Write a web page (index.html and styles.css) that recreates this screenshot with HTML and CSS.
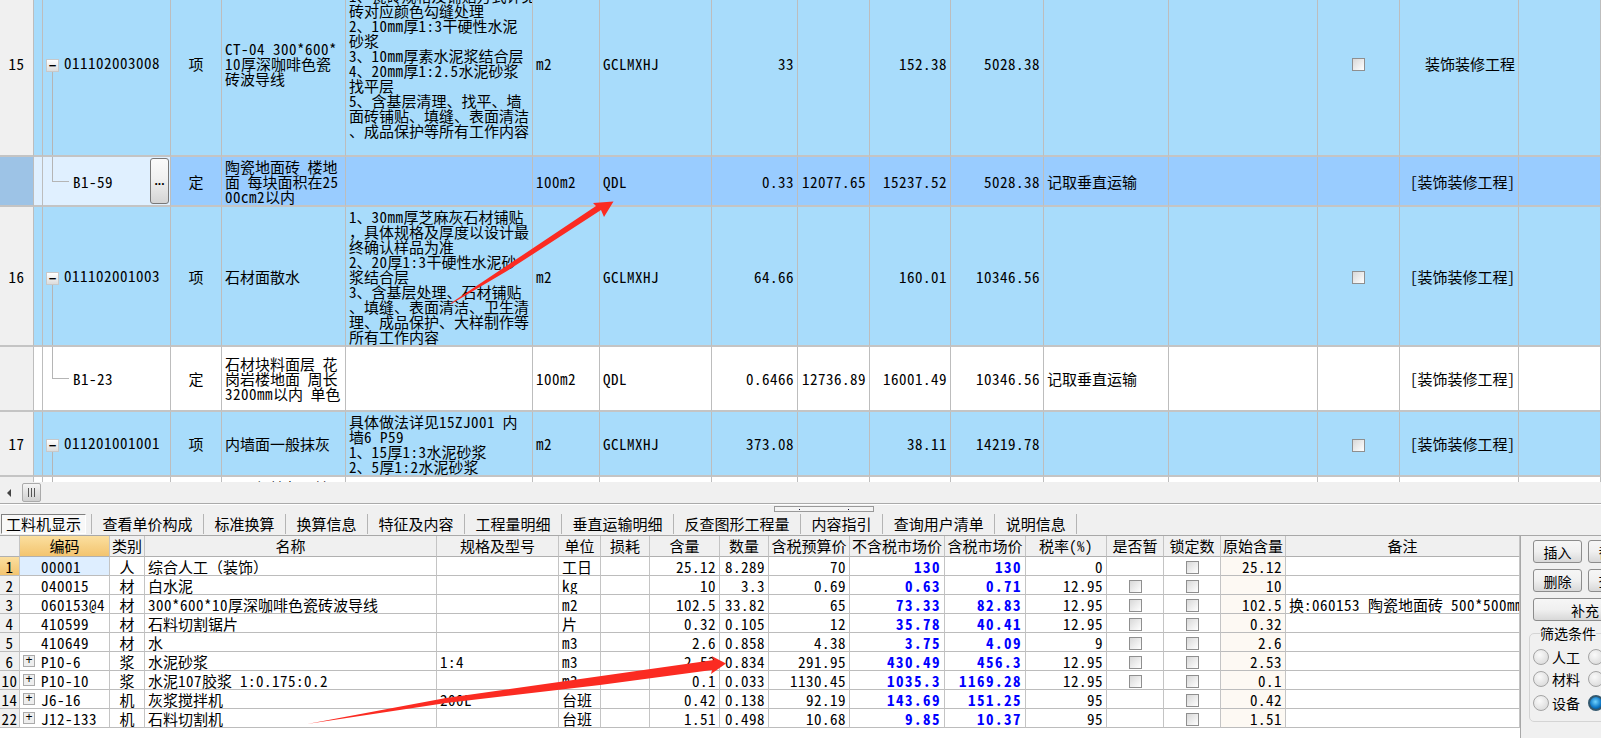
FILE: index.html
```html
<!DOCTYPE html>
<html lang="zh-CN">
<head>
    <meta charset="UTF-8">
    <title>分部分项工程量清单</title>
    <link rel="stylesheet" href="styles.css">
</head>
<body>
    <div class="page">
        <div class="top-grid">
            <table class="boq">
                <colgroup>
                    <col class="w34"><col class="w9"><col class="w128"><col class="w51"><col class="w124"><col class="w187"><col class="w67"><col class="w112"><col class="w86"><col class="w72"><col class="w81"><col class="w93"><col class="w125"><col class="w149"><col class="w82"><col class="w119"><col class="w82">
                </colgroup>
                <tr class="item h186">
                    <td class="rownum n">15</td><td></td>
                    <td class="code tree-down"><span class="toggle">−</span><span class="n">011102003008</span></td>
                    <td class="mid">项</td>
                    <td><span class="n">CT-04 300*600*</span><br><span class="n">10</span>厚深咖啡色瓷<br>砖波导线</td>
                    <td>1、瓷砖规格及铺贴方式详见设计，根据面<br>砖对应颜色勾缝处理<br>2、<span class="n">10mm</span>厚<span class="n">1:3</span>干硬性水泥<br>砂浆<br>3、<span class="n">10mm</span>厚素水泥浆结合层<br>4、<span class="n">20mm</span>厚<span class="n">1:2.5</span>水泥砂浆<br>找平层<br>5、含基层清理、找平、墙<br>面砖铺贴、填缝、表面清洁<br>、成品保护等所有工作内容</td>
                    <td class="n">m2</td><td class="n">GCLMXHJ</td><td class="n right">33</td><td></td>
                    <td class="n right">152.38</td><td class="n right">5028.38</td><td></td><td></td>
                    <td class="mid"><span class="check"></span></td>
                    <td class="right">装饰装修工程</td><td></td>
                </tr>
                <tr class="selected h50">
                    <td class="rownum"></td><td class="pale"></td>
                    <td class="child pale tree-end"><div class="child-row"><span class="n">B1-59</span><button class="more">...</button></div></td>
                    <td class="mid">定</td>
                    <td>陶瓷地面砖 楼地<br>面 每块面积在<span class="n">25</span><br><span class="n">00cm2</span>以内</td>
                    <td></td>
                    <td class="n">100m2</td><td class="n">QDL</td><td class="n right">0.33</td><td class="n right">12077.65</td>
                    <td class="n right">15237.52</td><td class="n right">5028.38</td><td>记取垂直运输</td><td></td><td></td>
                    <td class="right">[装饰装修工程]</td><td></td>
                </tr>
                <tr class="item h140">
                    <td class="rownum n">16</td><td></td>
                    <td class="code tree-down"><span class="toggle">−</span><span class="n">011102001003</span></td>
                    <td class="mid">项</td>
                    <td>石材面散水</td>
                    <td>1、<span class="n">30mm</span>厚芝麻灰石材铺贴<br>，具体规格及厚度以设计最<br>终确认样品为准<br>2、<span class="n">20</span>厚<span class="n">1:3</span>干硬性水泥砂<br>浆结合层<br>3、含基层处理、石材铺贴<br>、填缝、表面清洁、卫生清<br>理、成品保护、大样制作等<br>所有工作内容</td>
                    <td class="n">m2</td><td class="n">GCLMXHJ</td><td class="n right">64.66</td><td></td>
                    <td class="n right">160.01</td><td class="n right">10346.56</td><td></td><td></td>
                    <td class="mid"><span class="check"></span></td>
                    <td class="right">[装饰装修工程]</td><td></td>
                </tr>
                <tr class="plain h65">
                    <td class="rownum"></td><td></td>
                    <td class="child tree-end"><div class="child-row"><span class="n">B1-23</span></div></td>
                    <td class="mid">定</td>
                    <td>石材块料面层 花<br>岗岩楼地面 周长<br><span class="n">3200mm</span>以内 单色</td>
                    <td></td>
                    <td class="n">100m2</td><td class="n">QDL</td><td class="n right">0.6466</td><td class="n right">12736.89</td>
                    <td class="n right">16001.49</td><td class="n right">10346.56</td><td>记取垂直运输</td><td></td><td></td>
                    <td class="right">[装饰装修工程]</td><td></td>
                </tr>
                <tr class="item h65">
                    <td class="rownum n">17</td><td></td>
                    <td class="code tree-down"><span class="toggle">−</span><span class="n">011201001001</span></td>
                    <td class="mid">项</td>
                    <td>内墙面一般抹灰</td>
                    <td>具体做法详见<span class="n">15ZJ001</span> 内<br>墙<span class="n">6 P59</span><br>1、<span class="n">15</span>厚<span class="n">1:3</span>水泥砂浆<br>2、<span class="n">5</span>厚<span class="n">1:2</span>水泥砂浆</td>
                    <td class="n">m2</td><td class="n">GCLMXHJ</td><td class="n right">373.08</td><td></td>
                    <td class="n right">38.11</td><td class="n right">14219.78</td><td></td><td></td>
                    <td class="mid"><span class="check"></span></td>
                    <td class="right">[装饰装修工程]</td><td></td>
                </tr>
                <tr class="plain h65 cut">
                    <td class="rownum"></td><td></td><td class="tree-line"></td><td></td>
                    <td class="indent">一般抹灰、墙面</td>
                    <td></td><td></td><td></td><td></td><td></td><td></td><td></td><td></td><td></td><td></td><td></td><td></td>
                </tr>
            </table>
        </div>

        <div class="hscroll">
            <span class="hscroll-arrow"></span>
            <span class="hscroll-thumb"><i></i><i></i><i></i></span>
        </div>

        <div class="tabs">
            <span class="tab active">工料机显示</span>
            <span class="tab">查看单价构成</span>
            <span class="tab">标准换算</span>
            <span class="tab">换算信息</span>
            <span class="tab">特征及内容</span>
            <span class="tab">工程量明细</span>
            <span class="tab">垂直运输明细</span>
            <span class="tab">反查图形工程量</span>
            <span class="tab">内容指引</span>
            <span class="tab">查询用户清单</span>
            <span class="tab last">说明信息</span>
            <span class="splitter"><i></i><i></i></span>
        </div>

        <div class="lower">
            <div class="lower-grid">
                <table class="parts">
                    <colgroup>
                        <col class="w20"><col class="w90"><col class="w35"><col class="w292"><col class="w122"><col class="w42"><col class="w49"><col class="w70"><col class="w49"><col class="w81"><col class="w95"><col class="w81"><col class="w81"><col class="w57"><col class="w57"><col class="w65"><col class="w234">
                    </colgroup>
                    <tr>
                        <th></th><th class="sorted">编码</th><th>类别</th><th>名称</th><th>规格及型号</th><th>单位</th><th>损耗</th><th>含量</th><th>数量</th><th>含税预算价</th><th>不含税市场价</th><th>含税市场价</th><th>税率<span class="n">(%)</span></th><th>是否暂</th><th>锁定数</th><th>原始含量</th><th>备注</th>
                    </tr>
                    <tr>
                        <td class="idx current n">1</td><td class="pcode focus n">00001</td><td class="mid">人</td><td>综合人工（装饰）</td><td></td><td>工日</td><td></td>
                        <td class="n right">25.12</td><td class="n right">8.289</td><td class="n right">70</td><td class="n price">130</td><td class="n price">130</td><td class="n right">0</td>
                        <td></td><td class="mid"><span class="check"></span></td><td class="n right orig">25.12</td><td></td>
                    </tr>
                    <tr>
                        <td class="idx n">2</td><td class="pcode n">040015</td><td class="mid">材</td><td>白水泥</td><td></td><td class="n">kg</td><td></td>
                        <td class="n right">10</td><td class="n right">3.3</td><td class="n right">0.69</td><td class="n price">0.63</td><td class="n price">0.71</td><td class="n right">12.95</td>
                        <td class="mid"><span class="check"></span></td><td class="mid"><span class="check"></span></td><td class="n right orig">10</td><td></td>
                    </tr>
                    <tr>
                        <td class="idx n">3</td><td class="pcode n">060153@4</td><td class="mid">材</td><td><span class="n">300*600*10</span>厚深咖啡色瓷砖波导线</td><td></td><td class="n">m2</td><td></td>
                        <td class="n right">102.5</td><td class="n right">33.82</td><td class="n right">65</td><td class="n price">73.33</td><td class="n price">82.83</td><td class="n right">12.95</td>
                        <td class="mid"><span class="check"></span></td><td class="mid"><span class="check"></span></td><td class="n right orig">102.5</td><td>换<span class="n">:060153 </span>陶瓷地面砖<span class="n"> 500*500mm</span></td>
                    </tr>
                    <tr>
                        <td class="idx n">4</td><td class="pcode n">410599</td><td class="mid">材</td><td>石料切割锯片</td><td></td><td>片</td><td></td>
                        <td class="n right">0.32</td><td class="n right">0.105</td><td class="n right">12</td><td class="n price">35.78</td><td class="n price">40.41</td><td class="n right">12.95</td>
                        <td class="mid"><span class="check"></span></td><td class="mid"><span class="check"></span></td><td class="n right orig">0.32</td><td></td>
                    </tr>
                    <tr>
                        <td class="idx n">5</td><td class="pcode n">410649</td><td class="mid">材</td><td>水</td><td></td><td class="n">m3</td><td></td>
                        <td class="n right">2.6</td><td class="n right">0.858</td><td class="n right">4.38</td><td class="n price">3.75</td><td class="n price">4.09</td><td class="n right">9</td>
                        <td class="mid"><span class="check"></span></td><td class="mid"><span class="check"></span></td><td class="n right orig">2.6</td><td></td>
                    </tr>
                    <tr>
                        <td class="idx n">6</td><td class="pcode sub n"><span class="toggle small">+</span>P10-6</td><td class="mid">浆</td><td>水泥砂浆</td><td class="n">1:4</td><td class="n">m3</td><td></td>
                        <td class="n right">2.53</td><td class="n right">0.834</td><td class="n right">291.95</td><td class="n price">430.49</td><td class="n price">456.3</td><td class="n right">12.95</td>
                        <td class="mid"><span class="check"></span></td><td class="mid"><span class="check"></span></td><td class="n right orig">2.53</td><td></td>
                    </tr>
                    <tr>
                        <td class="idx n">10</td><td class="pcode sub n"><span class="toggle small">+</span>P10-10</td><td class="mid">浆</td><td>水泥<span class="n">107</span>胶浆<span class="n"> 1:0.175:0.2</span></td><td></td><td class="n">m3</td><td></td>
                        <td class="n right">0.1</td><td class="n right">0.033</td><td class="n right">1130.45</td><td class="n price">1035.3</td><td class="n price">1169.28</td><td class="n right">12.95</td>
                        <td class="mid"><span class="check"></span></td><td class="mid"><span class="check"></span></td><td class="n right orig">0.1</td><td></td>
                    </tr>
                    <tr>
                        <td class="idx n">14</td><td class="pcode sub n"><span class="toggle small">+</span>J6-16</td><td class="mid">机</td><td>灰浆搅拌机</td><td class="n">200L</td><td>台班</td><td></td>
                        <td class="n right">0.42</td><td class="n right">0.138</td><td class="n right">92.19</td><td class="n price">143.69</td><td class="n price">151.25</td><td class="n right">95</td>
                        <td></td><td class="mid"><span class="check"></span></td><td class="n right orig">0.42</td><td></td>
                    </tr>
                    <tr>
                        <td class="idx n">22</td><td class="pcode sub n"><span class="toggle small">+</span>J12-133</td><td class="mid">机</td><td>石料切割机</td><td></td><td>台班</td><td></td>
                        <td class="n right">1.51</td><td class="n right">0.498</td><td class="n right">10.68</td><td class="n price">9.85</td><td class="n price">10.37</td><td class="n right">95</td>
                        <td></td><td class="mid"><span class="check"></span></td><td class="n right orig">1.51</td><td></td>
                    </tr>
                </table>
            </div>

            <div class="side">
                <div class="side-buttons">
                    <button class="btn">插入</button>
                    <button class="btn">替换</button>
                    <button class="btn">删除</button>
                    <button class="btn">查询</button>
                    <button class="btn wide">补充</button>
                </div>
                <fieldset class="filter">
                    <legend>筛选条件</legend>
                    <div class="radios">
                        <label class="radio"><i></i>人工</label>
                        <label class="radio"><i></i>主材</label>
                        <label class="radio"><i></i>材料</label>
                        <label class="radio"><i></i>机械</label>
                        <label class="radio"><i></i>设备</label>
                        <label class="radio on"><i></i>全部</label>
                    </div>
                </fieldset>
            </div>
        </div>

        <svg class="arrows" width="1601" height="738" viewBox="0 0 1601 738">
            <polygon points="451,303 596,206 593,203 613.5,201.5 604,217 601,210 507,271 451,304" fill="#fb2b22"/>
            <polygon points="307,724 446,698 714,660 711.5,656 726,663.5 711,674 712,670 600,685 446,703" fill="#fb2b22"/>
        </svg>
    </div>
</body>
</html>
```

FILE: styles.css
```css
* {
    box-sizing: border-box;
}

body {
    margin: 0;
    background: #f0f0f0;
    color: #000;
    font-family: "Noto Sans Mono CJK SC", "Noto Sans CJK SC", sans-serif;
    font-size: 15px;
}

.page {
    position: relative;
    width: 1601px;
    height: 738px;
    overflow: hidden;
    display: flex;
    flex-direction: column;
}

table {
    border-collapse: separate;
    border-spacing: 0;
    table-layout: fixed;
}

td, th {
    padding: 0 3px;
    overflow: hidden;
    white-space: nowrap;
    font-weight: normal;
}

/* latin and digits: half a pixel wider than the mono font gives */
.n {
    letter-spacing: 0.5px;
}

.right { text-align: right; }
.mid { text-align: center; }

.w9 { width: 9px; }
.w20 { width: 20px; }
.w34 { width: 34px; }
.w35 { width: 35px; }
.w42 { width: 42px; }
.w49 { width: 49px; }
.w51 { width: 51px; }
.w57 { width: 57px; }
.w65 { width: 65px; }
.w67 { width: 67px; }
.w70 { width: 70px; }
.w72 { width: 72px; }
.w81 { width: 81px; }
.w82 { width: 82px; }
.w86 { width: 86px; }
.w90 { width: 90px; }
.w93 { width: 93px; }
.w95 { width: 95px; }
.w112 { width: 112px; }
.w119 { width: 119px; }
.w122 { width: 122px; }
.w124 { width: 124px; }
.w125 { width: 125px; }
.w128 { width: 128px; }
.w149 { width: 149px; }
.w187 { width: 187px; }
.w234 { width: 234px; }
.w292 { width: 292px; }

/* upper grid */
.top-grid {
    height: 482px;
    flex: none;
    overflow: hidden;
    background: #fff;
}

.boq {
    width: 1601px;
    margin-top: -29px;
}

.boq td {
    line-height: 15px;
    border-right: 1px solid #bdbdbd;
    border-bottom: 2px solid #c4c4c4;
}

.h186 td { height: 186px; }
.h140 td { height: 140px; }
.h65 td { height: 65px; }
.h50 td { height: 50px; }

.item td { background-color: #a8dcfb; }
.selected td { background-color: #99ccff; }
.plain td { background-color: #fff; }

.boq .rownum {
    background-color: #f0f0f0;
    text-align: center;
    padding: 0;
}

.boq .selected .rownum { background-color: #9dc3e6; }
.boq .selected .pale { background-color: #e0f0ff; }

.cut td { vertical-align: top; padding-top: 3px; }
.boq .indent { padding-left: 18px; }

.boq .code { padding: 0 0 0 3px; }
.boq .child { padding: 0 1px 0 30px; }

.tree-down {
    background-image: linear-gradient(#b5b5b5, #b5b5b5);
    background-repeat: no-repeat;
    background-position: 9px 100%;
    background-size: 1px 50%;
}

.tree-line {
    background-image: linear-gradient(#b5b5b5, #b5b5b5);
    background-repeat: no-repeat;
    background-position: 9px 0;
    background-size: 1px 100%;
}

.tree-end {
    background-image: linear-gradient(#b5b5b5, #b5b5b5), linear-gradient(#b5b5b5, #b5b5b5);
    background-repeat: no-repeat;
    background-position: 9px 0, 9px 50%;
    background-size: 1px 50%, 17px 1px;
}

.toggle {
    display: inline-block;
    width: 13px;
    height: 13px;
    margin-right: 5px;
    border: 1px solid #c8c8c8;
    background: linear-gradient(#fff, #dcdcdc);
    font: bold 13px/11px "Liberation Sans", sans-serif;
    letter-spacing: 0;
    text-align: center;
    vertical-align: -1px;
}

.toggle.small {
    width: 12px;
    height: 12px;
    margin: 2px 6px 0 0;
    background: #eee;
    border-color: #aaa;
    font-size: 12px;
    font-weight: normal;
    line-height: 9px;
    vertical-align: top;
}

.child-row {
    display: flex;
    align-items: center;
    justify-content: space-between;
}

.more {
    width: 19px;
    height: 46px;
    padding: 0;
    border: 1px solid #777;
    border-radius: 3px;
    background: linear-gradient(#fafafa, #f0f0f0 45%, #d4d4d4);
    font: bold 12px/12px "Liberation Sans", sans-serif;
}

.check {
    display: inline-block;
    width: 13px;
    height: 13px;
    border: 1px solid #8f8f8f;
    background: linear-gradient(135deg, #d8d8d8, #fff);
    vertical-align: middle;
}

.parts .check {
    margin-top: 3px;
    vertical-align: top;
}

/* scrollbar and splitter */
.hscroll {
    height: 22px;
    flex: none;
    display: flex;
    align-items: center;
    padding-left: 7px;
    border-bottom: 1px solid #aaa;
}

.hscroll-arrow {
    width: 0;
    height: 0;
    border: 4px solid transparent;
    border-left-width: 0;
    border-right: 4px solid #444;
}

.hscroll-thumb {
    display: flex;
    gap: 2px;
    justify-content: center;
    align-items: center;
    width: 19px;
    height: 19px;
    margin-left: 11px;
    border: 1px solid #aaa;
    border-radius: 2px;
    background: linear-gradient(#f4f4f4, #d0d0d0);
}

.hscroll-thumb i {
    width: 1px;
    height: 9px;
    background: #555;
}

/* tab strip */
.tabs {
    position: relative;
    height: 32px;
    flex: none;
    display: flex;
    padding-top: 9px;
    border-top: 1px solid #fff;
    border-bottom: 1px solid #a8a8a8;
}

.tab {
    height: 20px;
    padding: 0 10.5px;
    border-left: 1px solid #b4b4b4;
    line-height: 20px;
    white-space: nowrap;
}

.tab.last { border-right: 1px solid #b4b4b4; }

.tab.active {
    width: 85px;
    margin: 0 5px 0 1px;
    padding: 0 4px;
    border: 1px solid;
    border-color: #808080 #fff #fff #808080;
    background: #f8f8f8;
    line-height: 18px;
}

.splitter {
    position: absolute;
    left: 774px;
    top: 1px;
    width: 100px;
    height: 6px;
    display: flex;
    justify-content: space-around;
    align-items: center;
    border: 1px solid #999;
    background: #f4f4f4;
}

.splitter i {
    width: 1px;
    height: 1px;
    background: #113;
}

/* lower grid */
.lower {
    flex: 1;
    display: flex;
    min-height: 0;
}

.lower-grid {
    width: 1521px;
    flex: none;
    background: #fff;
    border-right: 1px solid #a8a8a8;
}

.parts {
    width: 1520px;
}

.parts th {
    height: 21px;
    padding: 0;
    background: #f0f0f0;
    border-right: 1px solid #c4c4c4;
    border-bottom: 1px solid #b0b0b0;
    line-height: 20px;
    text-align: center;
}

.parts .sorted {
    background: linear-gradient(#fbdf9f, #f3c46f);
}

.parts td {
    height: 19px;
    line-height: 17px;
    padding: 1px 3px 0;
    border-right: 1px solid #c4c4c4;
    border-bottom: 1px solid #bcbcbc;
}

.parts .idx {
    padding: 1px 0 0;
    background: #f0f0f0;
    text-align: center;
}

.parts .current { background: linear-gradient(#fbdf9f, #f3c46f); }
.parts .focus { background: #deeeff; }
.parts .orig { background: #fdf9f3; }

.parts .pcode { padding-left: 21px; }
.parts .pcode.sub { padding-left: 3px; }

.parts .price {
    color: #0000ff;
    font-weight: bold;
    letter-spacing: 1.5px;
    text-align: right;
}

/* right hand panel */
.side {
    flex: 1;
    overflow: hidden;
    padding: 4px 0 0 8px;
}

.side-buttons {
    display: grid;
    grid-template-columns: 49px 49px;
    grid-auto-rows: 23px;
    gap: 6px;
    width: 104px;
    margin-left: 4px;
}

.btn {
    padding: 0;
    border: 1px solid #8c8c8c;
    border-radius: 3px;
    background: linear-gradient(#f6f6f6, #f0f0f0 50%, #d8d8d8);
    font: inherit;
    font-size: 14px;
    line-height: 20px;
}

.btn.wide { grid-column: 1 / 3; }

.filter {
    width: 110px;
    height: 97px;
    margin: 4px 0 0;
    padding: 7px 0 0 3px;
    border: 1px solid #d4d4d4;
    border-radius: 5px;
}

.filter legend {
    margin-left: 7px;
    padding: 0;
    line-height: 17px;
    font-size: 14px;
}

.radios {
    display: grid;
    grid-template-columns: 55px 55px;
    grid-template-rows: 22px 24px 16px;
}

.radio {
    display: flex;
    align-items: flex-start;
    gap: 3px;
    font-size: 14px;
    line-height: 16px;
    white-space: nowrap;
}

.radio i {
    flex: none;
    width: 16px;
    height: 16px;
    border: 1px solid #a4a4a4;
    border-radius: 50%;
    background: radial-gradient(circle at 40% 35%, #fafafa, #d4d4d4);
}

.radio.on i {
    border: 2px solid #33586e;
    background: radial-gradient(circle at 45% 40%, #6fd3ff, #0a74c4 60%, #06456f);
}

.arrows {
    position: absolute;
    left: 0;
    top: 0;
    pointer-events: none;
}
```
